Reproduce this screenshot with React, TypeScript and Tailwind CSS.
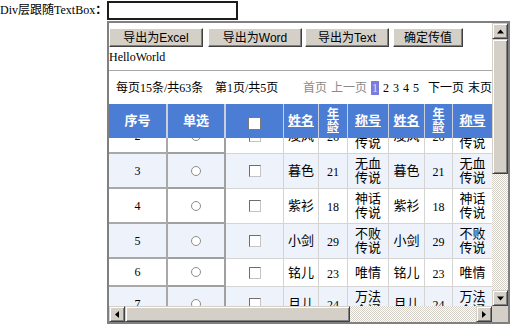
import React from 'react';

interface Row {
  no: number;
  name: string;
  age: number;
  title: string[];
  h: string;
}

const rows: Row[] = [
  { no: 2, name: '凌风', age: 26, title: ['逍遥', '传说'], h: 'h-[35px]' },
  { no: 3, name: '暮色', age: 21, title: ['无血', '传说'], h: 'h-[35px]' },
  { no: 4, name: '紫衫', age: 18, title: ['神话', '传说'], h: 'h-[35px]' },
  { no: 5, name: '小剑', age: 29, title: ['不败', '传说'], h: 'h-[35px]' },
  { no: 6, name: '铭儿', age: 23, title: ['唯情'], h: 'h-[28px]' },
  { no: 7, name: '月儿', age: 24, title: ['万法', '全通'], h: 'h-[35px]' },
];

const serif = "font-['Liberation_Serif','Noto_Sans_CJK_SC',serif]";
const sans = "font-['Liberation_Sans','Noto_Sans_CJK_SC',sans-serif]";
const raised =
  'bg-[#d4d0c8] border border-t-[#d4d0c8] border-l-[#d4d0c8] border-r-[#404040] border-b-[#404040] shadow-[inset_1px_1px_0_#fff,inset_-1px_-1px_0_#808080]';
const track = 'bg-[repeating-conic-gradient(#d4d0c8_0_25%,#ffffff_0_50%)] bg-[length:2px_2px]';

const Arrow = ({ dir }: { dir: 'up' | 'down' | 'left' | 'right' }) => {
  const d = {
    up: 'M3.5 0.5L7 4.5H0z',
    down: 'M0 0.5H7L3.5 4.5z',
    left: 'M4 0L4 7L0 3.5z',
    right: 'M0 0L4 3.5L0 7z',
  }[dir];
  const vertical = dir === 'up' || dir === 'down';
  return (
    <svg width={vertical ? 7 : 4} height={vertical ? 5 : 7} viewBox={vertical ? '0 0 7 5' : '0 0 4 7'}>
      <path d={d} fill="#000" />
    </svg>
  );
};

const ScrollBtn = ({ dir }: { dir: 'up' | 'down' | 'left' | 'right' }) => (
  <div className={`w-[16px] h-[16px] shrink-0 flex items-center justify-center ${raised}`}>
    <Arrow dir={dir} />
  </div>
);

const Btn = ({ label, w }: { label: string; w: string }) => (
  <button
    className={`${w} h-[19px] ${sans} text-[12px] leading-none text-black bg-[#d4d0c8] border border-t-white border-l-white border-r-[#404040] border-b-[#404040] shadow-[inset_-1px_-1px_0_#808080]`}
  >
    {label}
  </button>
);

const Radio = () => <span className="block w-[10px] h-[10px] rounded-full border border-[#8c8c8c] bg-white" />;

const Check = () => (
  <span className="block w-[12px] h-[12px] border border-t-[#6e6e6e] border-l-[#6e6e6e] border-r-[#c4c4c4] border-b-[#c4c4c4] bg-white" />
);

const App = () => {
  return (
    <div className={`w-[521px] h-[336px] bg-white ${serif} text-[12px] text-black`}>
      <div className="flex items-start">
        <span className="pt-[3px] leading-[15px] w-[107px] whitespace-nowrap">
          Div层跟随TextBox<b className={sans}>：</b>
        </span>
        <div className="relative">
          <input className="block w-[131px] h-[19px] mt-[1px] border-2 border-[#1c1c1c] bg-white outline-none" />

          {/* follow layer */}
          <div className="absolute left-0 top-[calc(100%+1px)] w-[403px] h-[303px] border-2 border-[#808080] bg-white flex flex-col">
            <div className="flex h-[283px]">
              <div className="w-[383px] h-full overflow-hidden">
                <div className="h-[47px] pt-[5px]">
                  <div className="flex h-[19px]">
                    <Btn label="导出为Excel" w="w-[94px]" />
                    <div className="w-[5px]" />
                    <Btn label="导出为Word" w="w-[94px]" />
                    <div className="w-[3px]" />
                    <Btn label="导出为Text" w="w-[84px]" />
                    <div className="w-[4px]" />
                    <Btn label="确定传值" w="w-[70px]" />
                  </div>
                  <div className="h-[16px] leading-[16px] mt-[2px] text-[12px]">HelloWorld</div>
                </div>

                <div className="h-[34px] border-t border-[#a8a8a8] flex items-center text-[12px] whitespace-nowrap">
                  <span className="w-[106px] pl-[7px]">每页15条/共63条</span>
                  <span className="w-[88px]">第1页/共5页</span>
                  <span className="flex items-center gap-[4px]">
                    <span className="text-[#8a8a8a]">首页</span>
                    <span className="text-[#8a8a8a]">上一页</span>
                    <span className="bg-[#7c7ce0] text-[#dcdcff] px-[1px] leading-[14px]">1</span>
                    <span>2</span>
                    <span>3</span>
                    <span>4</span>
                    <span>5</span>
                    <span className="ml-[5px]">下一页</span>
                    <span>末页</span>
                  </span>
                </div>

                <div className={`flex h-[34px] bg-[#4b7dd4] text-white font-bold text-[13px] ${sans} leading-[14px] whitespace-nowrap`}>
                  <div className="w-[59px] shrink-0 flex items-center justify-center border-r-2 border-[#c9cfdc]">序号</div>
                  <div className="w-[58px] shrink-0 flex items-center justify-center border-r-2 border-[#c9cfdc]">单选</div>
                  <div className="w-[58px] shrink-0 flex items-center justify-center border-r border-[#c9cfdc]">
                    <span className="block w-[13px] h-[13px] mt-[4px] bg-white border border-[#7a7a7a]" />
                  </div>
                  <div className="w-[35px] shrink-0 flex items-center justify-center border-r border-[#c9cfdc] underline">姓名</div>
                  <div className="w-[29px] shrink-0 flex flex-col items-center justify-center border-r border-[#c9cfdc] underline text-[12px] leading-[13px]">
                    <span>年</span>
                    <span>龄</span>
                  </div>
                  <div className="w-[41px] shrink-0 flex items-center justify-center border-r border-[#c9cfdc] underline">称号</div>
                  <div className="w-[36px] shrink-0 flex items-center justify-center border-r border-[#c9cfdc] underline">姓名</div>
                  <div className="w-[28px] shrink-0 flex flex-col items-center justify-center border-r border-[#c9cfdc] underline text-[12px] leading-[13px]">
                    <span>年</span>
                    <span>龄</span>
                  </div>
                  <div className="w-[40px] shrink-0 flex items-center justify-center border-r border-[#c9cfdc] underline">称号</div>
                </div>

                <div className="h-[168px] overflow-hidden">
                  <div className="-mt-[19px] text-[13px] leading-[14px]">
                    {rows.map(r => (
                      <div key={r.no} className={`flex ${r.h} ${r.no % 2 ? 'bg-[#edf2fb]' : 'bg-white'}`}>
                        <div className="w-[59px] shrink-0 flex items-center justify-center border-r-2 border-b-2 border-[#a9a9a9] text-[12px]">
                          {r.no}
                        </div>
                        <div className="w-[58px] shrink-0 flex items-center justify-center border-r-2 border-b-2 border-[#a0a0a0]">
                          <Radio />
                        </div>
                        <div className="w-[58px] shrink-0 flex items-center justify-center border-r border-b border-[#d4d4d4]">
                          <Check />
                        </div>
                        <div className="w-[35px] shrink-0 flex items-center justify-center border-r border-b border-[#d4d4d4]">{r.name}</div>
                        <div className="w-[29px] shrink-0 flex items-center justify-center border-r border-b border-[#d4d4d4] text-[12px] pt-[2px]">{r.age}</div>
                        <div className="w-[41px] shrink-0 flex flex-col items-center justify-center border-r border-b border-[#d4d4d4]">
                          {r.title.map(t => <span key={t}>{t}</span>)}
                        </div>
                        <div className="w-[36px] shrink-0 flex items-center justify-center border-r border-b border-[#d4d4d4]">{r.name}</div>
                        <div className="w-[28px] shrink-0 flex items-center justify-center border-r border-b border-[#d4d4d4] text-[12px] pt-[2px]">{r.age}</div>
                        <div className="w-[40px] shrink-0 flex flex-col items-center justify-center border-r border-b border-[#d4d4d4]">
                          {r.title.map(t => <span key={t}>{t}</span>)}
                        </div>
                      </div>
                    ))}
                  </div>
                </div>
              </div>

              {/* vertical scrollbar */}
              <div className={`w-[16px] h-full flex flex-col ${track}`}>
                <ScrollBtn dir="up" />
                <div className={`h-[135px] ${raised}`} />
                <div className="flex-1" />
                <ScrollBtn dir="down" />
              </div>
            </div>

            {/* horizontal scrollbar */}
            <div className="flex h-[16px]">
              <div className={`w-[383px] flex ${track}`}>
                <ScrollBtn dir="left" />
                <div className={`w-[225px] ${raised}`} />
                <div className="flex-1" />
                <ScrollBtn dir="right" />
              </div>
              <div className="w-[16px] bg-[#d4d0c8]" />
            </div>
          </div>
        </div>
      </div>
    </div>
  );
};

export default App;
